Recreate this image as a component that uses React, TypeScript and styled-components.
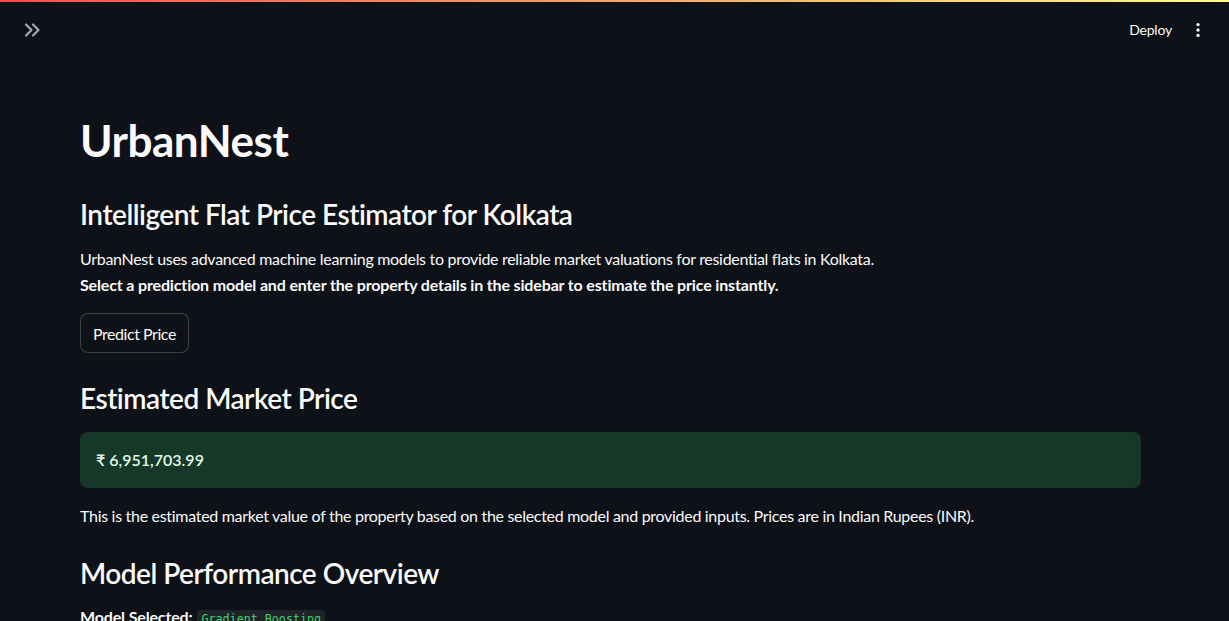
import React from "react";
import styled, { createGlobalStyle } from "styled-components";

const Global = createGlobalStyle`
  html, body { margin: 0; padding: 0; background: #0e1117; }
  body { font-family: "Source Sans Pro", Lato, "Noto Sans", sans-serif; color: #fafafa; }
  * { box-sizing: border-box; }
`;

const Page = styled.div`
  width: 100%;
  height: 621px;
  overflow: hidden;
  background: #0e1117;
`;

const Decoration = styled.div`
  height: 2px;
  background: linear-gradient(90deg, rgb(255, 75, 75), rgb(255, 253, 128));
`;

const Header = styled.header`
  height: 55px;
  display: flex;
  align-items: center;
  justify-content: space-between;
  padding: 0 21px 0 20px;
`;

const IconButton = styled.button<{ $muted?: boolean }>`
  background: none;
  border: none;
  padding: 0;
  display: flex;
  align-items: center;
  justify-content: center;
  color: ${(p) => (p.$muted ? "#a3a8b4" : "#fafafa")};
  cursor: pointer;
`;

const Toolbar = styled.div`
  display: flex;
  align-items: center;
  gap: 16px;
`;

const DeployButton = styled.button`
  background: none;
  border: none;
  color: #fafafa;
  font-family: inherit;
  font-size: 14px;
  letter-spacing: -0.2px;
  padding: 0;
`;

const Main = styled.main`
  padding: 57px 88px 0 80px;
  display: flex;
  flex-direction: column;
  align-items: flex-start;
`;

const Title = styled.h1`
  margin: 0;
  font-size: 44px;
  line-height: 52px;
  font-weight: 700;
  letter-spacing: -0.45px;
`;

const Subheader = styled.h3<{ $top: number }>`
  margin: ${(p) => p.$top}px 0 0;
  font-size: 28px;
  line-height: 34px;
  font-weight: 600;
  letter-spacing: -0.5px;
`;

const Paragraph = styled.p<{ $top: number }>`
  margin: ${(p) => p.$top}px 0 0;
  font-size: 16px;
  line-height: 25.6px;
  letter-spacing: -0.3px;

  strong {
    letter-spacing: -0.15px;
  }
`;

const Button = styled.button`
  margin-top: 16px;
  height: 40px;
  padding: 0 12px;
  border-radius: 8px;
  border: 1px solid rgba(250, 250, 250, 0.2);
  background: #0e1117;
  color: #fafafa;
  font-family: inherit;
  font-size: 16px;
  letter-spacing: -0.45px;
`;

const SuccessBox = styled.div`
  margin-top: 17px;
  width: 100%;
  padding: 15px 16px;
  border-radius: 8px;
  background: rgba(61, 213, 109, 0.2);
  color: #dffde9;
  font-size: 16px;
  line-height: 25.6px;
  font-weight: 600;
`;

const Code = styled.code`
  font-family: "DejaVu Sans Mono", "Liberation Mono", monospace;
  font-size: 11.7px;
  letter-spacing: 0;
  color: #3dd56d;
  background: rgba(250, 250, 250, 0.08);
  padding: 2px 4px;
  border-radius: 4px;
  margin-left: 5px;
`;

export default function App() {
  return (
    <Page>
      <Global />
      <Decoration />
      <Header>
        <IconButton $muted aria-label="Expand sidebar">
          <svg width="24" height="24" viewBox="0 0 24 24" fill="none" stroke="currentColor" strokeWidth="2.2" strokeLinecap="round" strokeLinejoin="round">
            <path d="M6 6.5l5.5 5.5L6 17.5" />
            <path d="M13 6.5l5.5 5.5-5.5 5.5" />
          </svg>
        </IconButton>
        <Toolbar>
          <DeployButton>Deploy</DeployButton>
          <IconButton aria-label="Main menu">
            <svg width="20" height="20" viewBox="0 0 24 24" fill="currentColor">
              <circle cx="12" cy="5.5" r="2" />
              <circle cx="12" cy="12" r="2" />
              <circle cx="12" cy="18.5" r="2" />
            </svg>
          </IconButton>
        </Toolbar>
      </Header>
      <Main>
        <Title>UrbanNest</Title>
        <Subheader $top={31}>Intelligent Flat Price Estimator for Kolkata</Subheader>
        <Paragraph $top={15}>
          UrbanNest uses advanced machine learning models to provide reliable market valuations for residential flats in Kolkata.
          <br />
          <strong>Select a prediction model and enter the property details in the sidebar to estimate the price instantly.</strong>
        </Paragraph>
        <Button>Predict Price</Button>
        <Subheader $top={28}>Estimated Market Price</Subheader>
        <SuccessBox>₹ 6,951,703.99</SuccessBox>
        <Paragraph $top={15}>
          This is the estimated market value of the property based on the selected model and provided inputs. Prices are in Indian Rupees (INR).
        </Paragraph>
        <Subheader $top={28}>Model Performance Overview</Subheader>
        <Paragraph $top={14}>
          <strong>Model Selected:</strong>
          <Code>Gradient Boosting</Code>
        </Paragraph>
      </Main>
    </Page>
  );
}
